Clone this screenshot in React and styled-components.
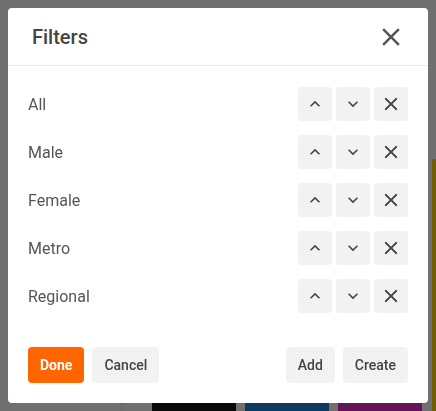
import styled, { createGlobalStyle } from "styled-components";
import { MdKeyboardArrowUp, MdKeyboardArrowDown, MdClose } from "react-icons/md";

const GlobalStyle = createGlobalStyle`
  html, body {
    margin: 0;
    padding: 0;
    font-family: Roboto, "Liberation Sans", sans-serif;
  }
`;

const filters = ["All", "Male", "Female", "Metro", "Regional"];
const tiles = ["#090909", "#0f3a5e", "#621456"];

const App = () => {
  return (
    <>
      <GlobalStyle />
      <Page>
        <Tiles>
          <Divider />
          {tiles.map((c) => (
            <Tile key={c} color={c} />
          ))}
        </Tiles>
        <SidePanel />
      </Page>

      <Overlay>
        <Modal>
          <Header>
            <Title>Filters</Title>
            <CloseIcon />
          </Header>
          <Body>
            {filters.map((name) => (
              <Row key={name}>
                <Label>{name}</Label>
                <Actions>
                  <IconButton small>
                    <MdKeyboardArrowUp />
                  </IconButton>
                  <IconButton small>
                    <MdKeyboardArrowDown />
                  </IconButton>
                  <IconButton>
                    <MdClose />
                  </IconButton>
                </Actions>
              </Row>
            ))}
          </Body>
          <Footer>
            <Group>
              <Button primary>Done</Button>
              <Button>Cancel</Button>
            </Group>
            <Group>
              <Button>Add</Button>
              <Button>Create</Button>
            </Group>
          </Footer>
        </Modal>
      </Overlay>
    </>
  );
};

export default App;

const Page = styled.div`
  height: 100vh;
  background-color: #6f6f6f;
  display: grid;
  grid-template-columns: 1fr 4px;
  grid-template-rows: 159px 1fr;
  overflow: hidden;
`;

const Tiles = styled.div`
  grid-column: 1;
  grid-row: 2;
  align-self: end;
  display: flex;
  align-items: flex-end;
  height: 8px;
  gap: 9px;
  padding-left: 121px;
`;

const Divider = styled.div`
  width: 1px;
  height: 100%;
  background-color: #666;
  margin-right: 21px;
`;

const Tile = styled.div`
  width: 84px;
  height: 100%;
  background-color: ${({ color }) => color};
`;

const SidePanel = styled.div`
  grid-column: 2;
  grid-row: 2;
  background-color: #6f5d08;
  border-top-left-radius: 2px;
`;

const Overlay = styled.div`
  position: fixed;
  inset: 0;
  display: flex;
  padding: 8px;
`;

const Modal = styled.div`
  width: 420px;
  height: 395px;
  background-color: #fff;
  border-radius: 4px;
  display: flex;
  flex-direction: column;
`;

const Header = styled.div`
  height: 57px;
  padding: 0 22px 0 24px;
  display: flex;
  align-items: center;
  justify-content: space-between;
  border-bottom: 1px solid #ededed;
`;

const Title = styled.h2`
  margin: 0;
  font-size: 20px;
  font-weight: 500;
  color: #444;
`;

const CloseIcon = styled(MdClose)`
  font-size: 30px;
  color: #555;
  cursor: pointer;
`;

const Body = styled.div`
  padding: 21px 20px 0;
  display: flex;
  flex-direction: column;
  gap: 14px;
`;

const Row = styled.div`
  height: 34px;
  display: flex;
  align-items: center;
  justify-content: space-between;
`;

const Label = styled.span`
  font-size: 16px;
  color: #555;
`;

const Actions = styled.div`
  display: flex;
  gap: 4px;
`;

const IconButton = styled.button`
  width: 34px;
  height: 34px;
  padding: 0;
  border: 0;
  border-radius: 4px;
  background-color: #f2f2f2;
  color: #444;
  display: flex;
  align-items: center;
  justify-content: center;
  font-size: ${({ small }) => (small ? "20px" : "22px")};
  cursor: pointer;
`;

const Footer = styled.div`
  margin-top: auto;
  padding: 0 20px 20px;
  display: flex;
  justify-content: space-between;
`;

const Group = styled.div`
  display: flex;
  gap: 8px;
`;

const Button = styled.button`
  height: 36px;
  padding: 0 12px;
  border: 0;
  border-radius: 4px;
  font-family: Roboto, "Liberation Sans", sans-serif;
  font-size: 14px;
  font-weight: ${({ primary }) => (primary ? 700 : 500)};
  background-color: ${({ primary }) => (primary ? "#ff6600" : "#f2f2f2")};
  color: ${({ primary }) => (primary ? "#fff" : "#444")};
  cursor: pointer;
`;
